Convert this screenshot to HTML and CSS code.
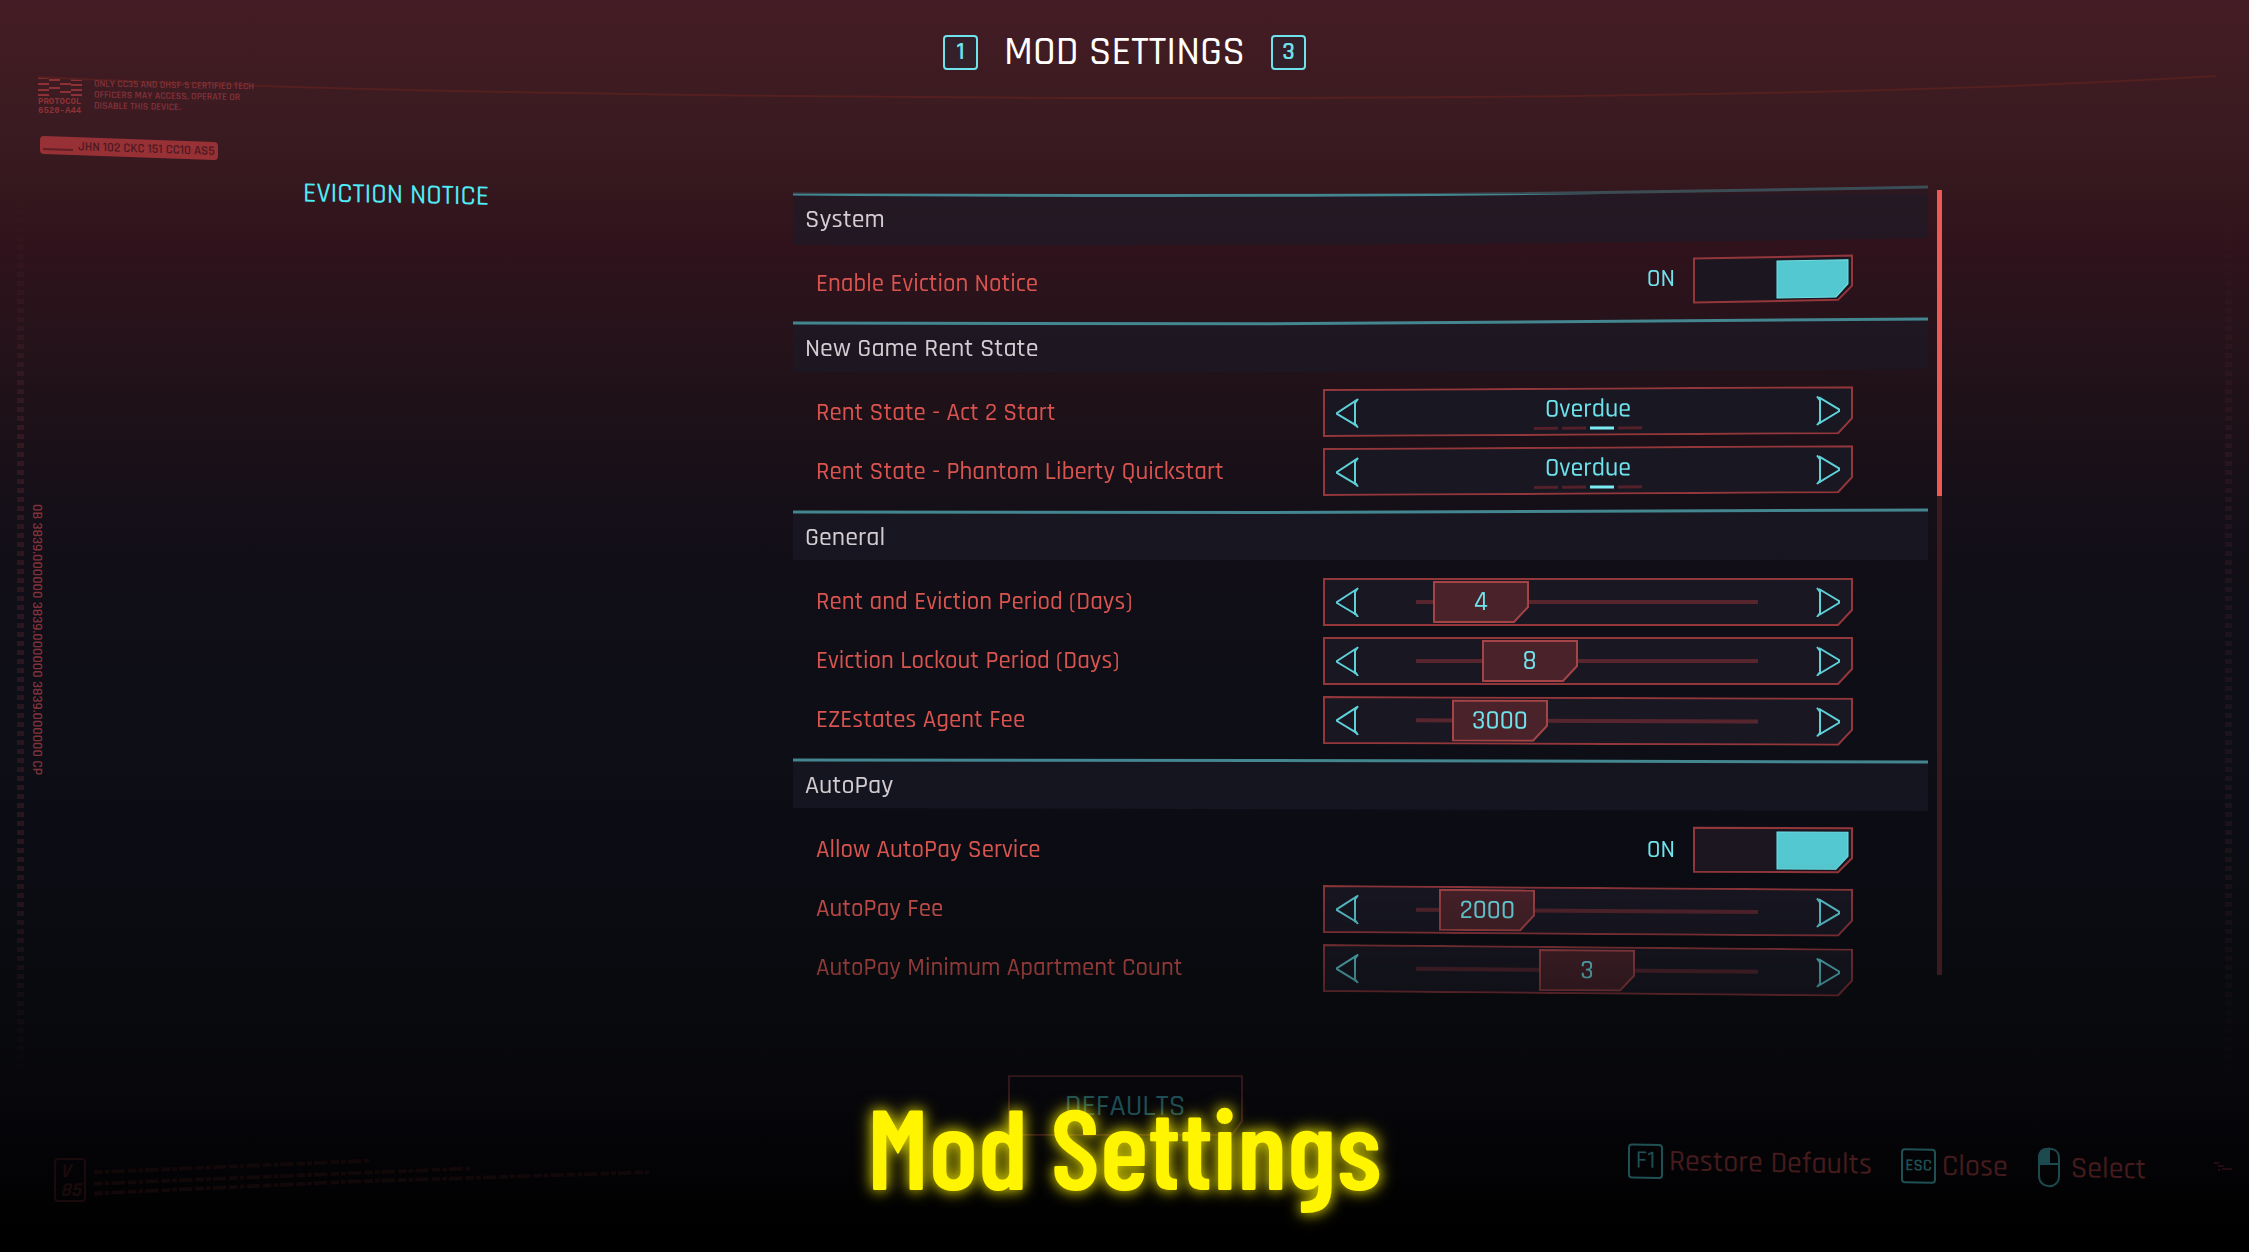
FILE: index.html
```html
<!DOCTYPE html>
<html lang="en">
<head>
<meta charset="utf-8">
<meta name="viewport" content="width=device-width, initial-scale=1">
<title>Mod Settings</title>
<link rel="stylesheet" href="styles.css">
</head>
<body>
<svg class="defs" aria-hidden="true">
  <symbol id="arrow-left" viewBox="0 0 26 30"><path d="M22 2 L2 15 V16 L22 28"/><path d="M20 3 V28 M23 1 L20 5 M23 30 L20 26"/></symbol>
  <symbol id="arrow-right" viewBox="0 0 26 30"><path d="M4 2 L24 14 V16 L4 28"/><path d="M5 3 V28 M2 1 L5 5 M2 30 L5 26"/></symbol>
  <symbol id="frame" viewBox="0 0 530 48"><path d="M1 1 H529 V32 L515 47 H1 Z"/></symbol>
  <symbol id="handle" viewBox="0 0 96 42"><path d="M1 1 H95 V26 L81 41 H1 Z"/></symbol>
</svg>

<div class="screen">
  <svg class="horizon" viewBox="0 0 2249 110" preserveAspectRatio="none" aria-hidden="true">
    <path d="M38 77 C300 90 650 97 1120 98 S1950 92 2216 76"/>
  </svg>
  <div class="ticks ticks-left" aria-hidden="true"></div>
  <div class="ticks ticks-right" aria-hidden="true"></div>
  <p class="serial" aria-hidden="true">0B 3839.000000 3839.000000 3839.000000 CP</p>

  <header class="top">
    <div class="hud" aria-hidden="true">
      <div class="protocol">
        <div class="protocol-mark">
          <svg viewBox="0 0 44 20"><path d="M0 1h11M11 3h11M22 7h11M33 3h11M0 7h11M11 11h11M22 15h11M0 13h11M33 8h11M33 13h11M0 18h11M33 18h11"/></svg>
          <span>PROTOCOL</span><span>6520-A44</span>
        </div>
        <p class="protocol-note">ONLY CC35 AND DHSF-5 CERTIFIED TECH<br>OFFICERS MAY ACCESS, OPERATE OR<br>DISABLE THIS DEVICE.</p>
      </div>
      <div class="badge"><i></i>JHN 102 CKC 151 CC10 AS5</div>
    </div>
    <div class="heading">
      <button class="key" type="button">1</button>
      <h1>MOD SETTINGS</h1>
      <button class="key" type="button">3</button>
    </div>
  </header>

  <main class="content">
    <nav class="mods"><a href="#eviction" aria-current="page">EVICTION NOTICE</a></nav>

    <div class="panel" id="eviction">
      <div class="sections">
        <section>
          <h2><svg viewBox="0 0 1135 50" preserveAspectRatio="none"><path class="band" d="M0 0 C400 3 700 2 1135 -7 V44 C700 51 400 52 0 51 Z"/><path class="rule" d="M0 0 C400 3 700 2 1135 -7"/></svg><span>System</span></h2>
          <div class="rows">
            <div class="row tilt-a">
              <label for="enable">Enable Eviction Notice</label>
              <div class="toggle"><span>ON</span><input type="checkbox" id="enable" checked><svg viewBox="0 0 160 46" aria-hidden="true"><path class="box" d="M1 1 H159 V31 L145 45 H1 Z"/><path class="fill" d="M84 5 H155 V29 L143 42 H84 Z"/></svg></div>
            </div>
          </div>
        </section>

        <section>
          <h2><svg viewBox="0 0 1135 50" preserveAspectRatio="none"><path class="band" d="M0 0 C400 2 700 1 1135 -4 V46 C700 49 400 50 0 49 Z"/><path class="rule" d="M0 0 C400 2 700 1 1135 -4"/></svg><span>New Game Rent State</span></h2>
          <div class="rows">
            <div class="row tilt-b">
              <span class="name">Rent State - Act 2 Start</span>
              <div class="control"><svg class="frame" aria-hidden="true"><use href="#frame"/></svg>
                <button type="button" aria-label="Previous"><svg><use href="#arrow-left"/></svg></button>
                <div class="choice"><output>Overdue</output><div class="pips"><i></i><i></i><i class="on"></i><i></i></div></div>
                <button type="button" aria-label="Next"><svg><use href="#arrow-right"/></svg></button></div>
            </div>
            <div class="row tilt-b">
              <span class="name">Rent State - Phantom Liberty Quickstart</span>
              <div class="control"><svg class="frame" aria-hidden="true"><use href="#frame"/></svg>
                <button type="button" aria-label="Previous"><svg><use href="#arrow-left"/></svg></button>
                <div class="choice"><output>Overdue</output><div class="pips"><i></i><i></i><i class="on"></i><i></i></div></div>
                <button type="button" aria-label="Next"><svg><use href="#arrow-right"/></svg></button></div>
            </div>
          </div>
        </section>

        <section>
          <h2><svg viewBox="0 0 1135 50" preserveAspectRatio="none"><path class="band" d="M0 0 C400 1 700 1 1135 -2 V48 H0 Z"/><path class="rule" d="M0 0 C400 1 700 1 1135 -2"/></svg><span>General</span></h2>
          <div class="rows">
            <div class="row">
              <label for="period">Rent and Eviction Period (Days)</label>
              <div class="control"><svg class="frame" aria-hidden="true"><use href="#frame"/></svg>
                <button type="button" aria-label="Decrease"><svg><use href="#arrow-left"/></svg></button>
                <div class="slider" style="--pos:0.069"><input type="range" id="period" min="1" max="44" value="4"><output for="period"><svg><use href="#handle"/></svg><span>4</span></output></div>
                <button type="button" aria-label="Increase"><svg><use href="#arrow-right"/></svg></button></div>
            </div>
            <div class="row">
              <label for="lockout">Eviction Lockout Period (Days)</label>
              <div class="control"><svg class="frame" aria-hidden="true"><use href="#frame"/></svg>
                <button type="button" aria-label="Decrease"><svg><use href="#arrow-left"/></svg></button>
                <div class="slider" style="--pos:0.267"><input type="range" id="lockout" min="1" max="27" value="8"><output for="lockout"><svg><use href="#handle"/></svg><span>8</span></output></div>
                <button type="button" aria-label="Increase"><svg><use href="#arrow-right"/></svg></button></div>
            </div>
            <div class="row tilt-c">
              <label for="agent">EZEstates Agent Fee</label>
              <div class="control"><svg class="frame" aria-hidden="true"><use href="#frame"/></svg>
                <button type="button" aria-label="Decrease"><svg><use href="#arrow-left"/></svg></button>
                <div class="slider" style="--pos:0.146"><input type="range" id="agent" min="0" max="20500" step="500" value="3000"><output for="agent"><svg><use href="#handle"/></svg><span>3000</span></output></div>
                <button type="button" aria-label="Increase"><svg><use href="#arrow-right"/></svg></button></div>
            </div>
          </div>
        </section>

        <section>
          <h2><svg viewBox="0 0 1135 50" preserveAspectRatio="none"><path class="band" d="M0 0 C400 0 700 1 1135 2 V51 L0 48 Z"/><path class="rule" d="M0 0 C400 0 700 1 1135 2"/></svg><span>AutoPay</span></h2>
          <div class="rows">
            <div class="row tilt-c">
              <label for="autopay">Allow AutoPay Service</label>
              <div class="toggle"><span>ON</span><input type="checkbox" id="autopay" checked><svg viewBox="0 0 160 46" aria-hidden="true"><path class="box" d="M1 1 H159 V31 L145 45 H1 Z"/><path class="fill" d="M84 5 H155 V29 L143 42 H84 Z"/></svg></div>
            </div>
            <div class="row tilt-d">
              <label for="fee">AutoPay Fee</label>
              <div class="control"><svg class="frame" aria-hidden="true"><use href="#frame"/></svg>
                <button type="button" aria-label="Decrease"><svg><use href="#arrow-left"/></svg></button>
                <div class="slider" style="--pos:0.095"><input type="range" id="fee" min="0" max="21000" step="500" value="2000"><output for="fee"><svg><use href="#handle"/></svg><span>2000</span></output></div>
                <button type="button" aria-label="Increase"><svg><use href="#arrow-right"/></svg></button></div>
            </div>
            <div class="row tilt-e">
              <label for="count">AutoPay Minimum Apartment Count</label>
              <div class="control"><svg class="frame" aria-hidden="true"><use href="#frame"/></svg>
                <button type="button" aria-label="Decrease"><svg><use href="#arrow-left"/></svg></button>
                <div class="slider" style="--pos:0.5"><input type="range" id="count" min="1" max="5" value="3"><output for="count"><svg><use href="#handle"/></svg><span>3</span></output></div>
                <button type="button" aria-label="Increase"><svg><use href="#arrow-right"/></svg></button></div>
            </div>
          </div>
        </section>
      </div>
      <div class="scrollbar" aria-hidden="true"><i></i></div>
    </div>
  </main>

  <div class="actions">
    <button class="defaults" type="button"><svg viewBox="0 0 236 61" aria-hidden="true"><path d="M1 1 H235 V46 L225 60 H1 Z"/></svg><span>DEFAULTS</span></button>
  </div>

  <footer class="bottom">
    <div class="build" aria-hidden="true">
      <div class="version"><span>V</span><span>85</span></div>
      <svg viewBox="0 0 580 40"><path d="M0 14 L285 2"/><path d="M0 26 L390 10"/><path d="M0 36 L260 24 L575 14"/></svg>
    </div>
    <div class="hints">
      <button type="button"><kbd>F1</kbd><span>Restore Defaults</span></button>
      <button type="button"><kbd class="small">ESC</kbd><span>Close</span></button>
      <button type="button" class="select"><svg viewBox="0 0 24 40" aria-hidden="true"><path class="solid" d="M12 1 C4 1 2 5 2 10 V16 H12 Z"/><path d="M12 1 C4 1 2 5 2 11 V28 C2 42 22 42 22 28 V11 C22 5 20 1 12 1 Z M2 16 H22 M12 1 V16"/></svg><span>Select</span></button>
    </div>
    <svg class="mark" viewBox="0 0 20 10" aria-hidden="true"><path d="M0 1h5M4 4h6M8 7h10M5 7v2"/></svg>
  </footer>

  <p class="caption">Mod Settings</p>
</div>
</body>
</html>
```
FILE: styles.css
```css
* { box-sizing: border-box; }

:root {
  --cyan: #6fe3ec;
  --red: #d9544f;
  --line: #93373b;
}

body {
  margin: 0;
  background: #000;
  font-family: Rajdhani, "Roboto Condensed", Roboto, sans-serif;
  font-weight: 500;
}

p, h1, h2 { margin: 0; font-weight: inherit; }

button {
  padding: 0;
  border: 0;
  background: none;
  color: inherit;
  font: inherit;
}

svg { display: block; overflow: visible; fill: none; stroke: currentColor; stroke-width: 2; }
.defs { position: absolute; width: 0; height: 0; }

.screen {
  position: relative;
  display: flex;
  flex-direction: column;
  min-height: 100vh;
  overflow: hidden;
  background: linear-gradient(#451c25 0%, #3f1b22 5%, #3a1b21 10%, #35171e 15%, #2f121b 20%, #28131b 25%, #1e1118 33%, #150f18 40%, #100e16 48%, #0d0e16 60%, #0b0c12 72%, #090a0d 80%, #07070c 87%, #030305 94%, #000 98%);
}

/* Background furniture that sits behind the menu */
.horizon {
  position: absolute;
  top: 0;
  left: 0;
  width: 100%;
  height: 110px;
  stroke: #54201f;
}

.ticks {
  position: absolute;
  top: 170px;
  bottom: 160px;
  width: 7px;
  opacity: .25;
  background: repeating-linear-gradient(transparent 0 3px, #7c343a 3px 8px, transparent 8px 9px);
  mask-image: linear-gradient(transparent, #000 30%, #000 75%, transparent);
}
.ticks-left { left: 17px; }
.ticks-right { right: 17px; opacity: .15; }

.serial {
  position: absolute;
  top: 504px;
  left: 29px;
  color: #83323a;
  font-size: 14px;
  font-weight: 600;
  line-height: 16px;
  writing-mode: vertical-rl;
}

/* Header */
.top {
  display: grid;
  grid-template-columns: 1fr auto 1fr;
  min-height: 166px;
  padding: 25px 38px 0;
}

.hud { padding-top: 52px; color: #8d3136; }
.protocol { display: flex; gap: 12px; height: 38px; }
.protocol-mark {
  display: flex;
  flex-direction: column;
  width: 44px;
  font: 700 9px/9px "Liberation Mono", monospace;
}
.protocol-mark svg { height: 20px; margin-bottom: 1px; }
.protocol-note {
  padding-top: 3px;
  color: #85323a;
  font-size: 10px;
  font-weight: 600;
  line-height: 11px;
  transform: skewY(1deg);
  white-space: nowrap;
}
.badge {
  display: flex;
  align-items: center;
  width: 178px;
  height: 18px;
  margin: 24px 0 0 2px;
  padding-left: 3px;
  border-radius: 4px;
  background: #983136;
  color: #4c1a22;
  font-size: 13px;
  font-weight: 600;
  transform: skewY(2deg);
  white-space: nowrap;
}
.badge i { width: 30px; height: 2px; margin: 8px 5px 0 0; background: #612026; }

.heading {
  display: flex;
  align-items: center;
  align-self: start;
  gap: 26px;
}
.heading h1 { color: #fff; font-size: 41px; line-height: 54px; }

.key, kbd {
  display: grid;
  place-items: center;
  width: 35px;
  height: 35px;
  border: 2px solid;
  border-radius: 4px;
  font: inherit;
  font-size: 25px;
  line-height: 1;
}
.key { background: #33202a; color: var(--cyan); font-weight: 600; }

/* Mod list and settings panel */
.content {
  display: grid;
  grid-template-columns: minmax(0, 793fr) minmax(0, 1149fr) minmax(0, 307fr);
  padding-top: 28px;
}

.mods { display: flex; justify-content: center; align-items: flex-start; }
.mods a {
  margin-top: -14px;
  color: #4fecf6;
  font-size: 28px;
  line-height: 30px;
  text-decoration: none;
  transform: skewY(1deg);
}

.panel { display: flex; justify-content: space-between; gap: 9px; }
.sections { flex: 1; mask: linear-gradient(#000 82%, #000b 92%, #0007) no-clip; }

.sections h2 {
  position: relative;
  display: flex;
  align-items: center;
  height: 50px;
  padding-left: 12px;
  color: #d3ccd1;
  font-size: 26px;
}
.sections h2 span { position: relative; }
.sections h2 svg { position: absolute; inset: 0; width: 100%; height: 100%; }
.band { fill: #1a1a28; fill-opacity: .6; stroke: none; }
.rule { stroke: #43868f; stroke-width: 3; }

.rows { padding: 10px 75px 11px 23px; }
.row {
  --tilt: 0deg;
  display: flex;
  justify-content: space-between;
  align-items: center;
  height: 59px;
  color: var(--red);
  font-size: 25px;
}
.tilt-a { --tilt: -1deg; }
.tilt-b { --tilt: -.3deg; }
.tilt-c { --tilt: .2deg; }
.tilt-d { --tilt: .4deg; }
.tilt-e { --tilt: .5deg; }
section:first-child .rows { padding-bottom: 10px; }
section:first-child .toggle { margin-top: -9px; }

.toggle {
  position: relative;
  display: flex;
  align-items: center;
  gap: 18px;
  color: var(--cyan);
}
.toggle input { position: absolute; right: 0; width: 160px; height: 46px; margin: 0; opacity: 0; }
.toggle svg {
  width: 160px;
  height: 46px;
  pointer-events: none;
  transform: skewY(var(--tilt));
}
.box { fill: #1c1620; stroke: var(--line); }
.fill { fill: #54c8d0; stroke: #6fdfe6; stroke-width: 1; }
.toggle input:not(:checked) + svg .fill { transform: translateX(-79px); }

.control {
  position: relative;
  display: flex;
  justify-content: space-between;
  align-items: center;
  width: 530px;
  height: 48px;
  padding: 0 12px;
  color: var(--cyan);
  transform: skewY(var(--tilt));
  transform-origin: left;
}
.control > * { position: relative; }
.control .frame {
  position: absolute;
  inset: 0;
  width: 100%;
  height: 100%;
  fill: #181722;
  stroke: var(--line);
}
.control button svg { width: 26px; height: 30px; stroke: #5fcfd8; }

.choice { display: flex; flex-direction: column; align-items: center; gap: 5px; padding-top: 4px; }
.choice output { line-height: 24px; font-size: 26px; }
.pips { display: flex; gap: 4px; }
.pips i { width: 24px; height: 3px; background: #54212a; }
.pips .on { background: #7cecf4; }

.slider { display: grid; align-items: center; width: 342px; height: 42px; margin-right: 2px; }
.slider input {
  width: 100%;
  height: 42px;
  margin: 0;
  appearance: none;
  background: linear-gradient(#57252e, #57252e) center / 100% 4px no-repeat;
}
.slider input::-webkit-slider-thumb { appearance: none; width: 96px; height: 42px; opacity: 0; }
.slider output {
  position: absolute;
  left: calc((100% - 96px) * var(--pos));
  width: 96px;
  height: 42px;
  display: grid;
  place-items: center;
  pointer-events: none;
  font-size: 27px;
}
.slider output svg { position: absolute; inset: 0; width: 96px; height: 42px; fill: #4a222a; stroke: #a54446; }
.slider output span { position: relative; }

.scrollbar { width: 5px; margin: -4px 0 33px; background: #3d1a1e; }
.scrollbar i { display: block; height: 39%; background: #ec5a53; }

/* Bottom area */
.actions { padding: 67px 0 0 44.8%; }
.defaults { position: relative; width: 235px; height: 61px; color: #1e4e53; font-size: 30px; }
.defaults svg { position: absolute; inset: 0; width: 100%; height: 100%; stroke: #34171a; }

.bottom {
  display: flex;
  align-items: flex-start;
  padding: 9px 15px 0 54px;
  color: #2a1012;
}
.build { display: flex; gap: 8px; padding-top: 13px; color: #190a0c; }
.version {
  display: flex;
  flex-direction: column;
  width: 32px;
  height: 44px;
  padding: 2px 4px;
  border: 2px solid;
  border-radius: 4px;
  font-size: 20px;
  font-style: italic;
  font-weight: 700;
  line-height: 19px;
}
.build svg { width: 560px; height: 40px; stroke: #120709; stroke-width: 4; stroke-dasharray: 9 2 5 2 14 3; }

.hints { display: flex; gap: 29px; margin-left: auto; transform: skewY(1deg); }
.hints button { display: flex; align-items: center; gap: 6px; color: #451b1d; font-size: 30px; line-height: 38px; }
.hints kbd { color: #1f5054; }
.hints .small { font-size: 17px; font-weight: 600; }
.hints .select { gap: 10px; }
.hints svg { width: 24px; height: 40px; stroke: #1c4a4e; }
.hints .solid { fill: #1c4a4e; }
.mark { width: 20px; height: 10px; margin: 17px 0 0 68px; stroke: #240d10; }

.caption {
  position: absolute;
  right: 0;
  bottom: 50px;
  left: 0;
  color: #fff500;
  font: 600 114px/1 "Barlow Condensed", Rajdhani, "Roboto Condensed", sans-serif;
  text-align: center;
  text-shadow: 0 0 18px #fff500b0, 0 0 12px #fff50090;
  pointer-events: none;
}
```
